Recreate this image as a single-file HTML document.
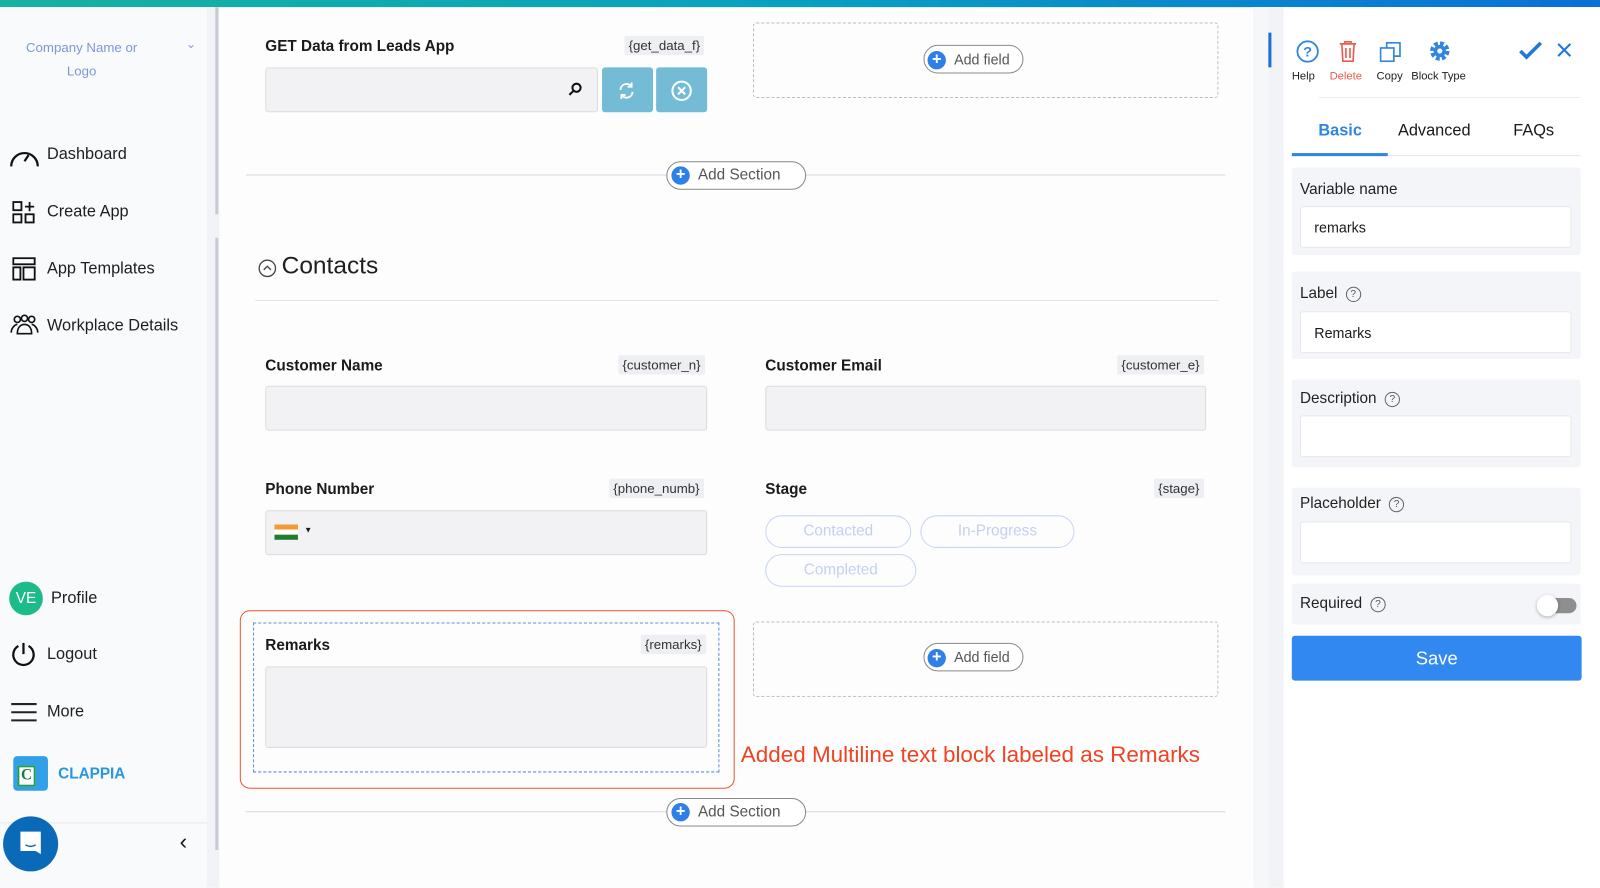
<!DOCTYPE html>
<html><head><meta charset="utf-8"><style>
*{box-sizing:border-box;margin:0;padding:0}
html,body{width:1600px;height:870px;overflow:hidden;background:#fdfdfe}
#w{position:absolute;left:0;top:0;width:1568px;height:853px;transform:scale(1.0204);transform-origin:0 0;font-family:"Liberation Sans",sans-serif;color:#1a1a1a}
.a{position:absolute}
.topbar{left:0;top:0;width:1568px;height:7px;background:linear-gradient(90deg,#17b2a0,#0aa0c0 50%,#0b6fd6)}
.nav{font-size:16px;color:#1f1f1f}
.lbl{font-size:15px;font-weight:bold;color:#1a1a1a}
.tag{font-size:13px;background:#eeeff2;color:#333;padding:2px 4px;border-radius:2px}
.inp{background:#f2f2f4;border:1px solid #dcdcdf;border-radius:3px}
.hr{height:1px;background:#d8d8dc}
.pill{border:1px solid #c7d4f3;border-radius:16px;color:#c3d0ef;font-size:15px;text-align:center;line-height:30px;height:32px}
.addbtn{border:1px solid #888;border-radius:14px;background:#fff;font-size:14px;color:#555;height:28px;line-height:26px}
.plus{display:inline-block;width:18px;height:18px;border-radius:50%;background:#2f7fe8;color:#fff;text-align:center;line-height:18px;font-weight:bold;font-size:16px;vertical-align:middle;margin-right:8px}
.dash{border:1px dashed #bbb;border-radius:3px}
.pcard{background:#f4f5f8;border-radius:3px}
.pin{background:#fff;border:1px solid #e8e8ec;border-radius:3px;font-size:14px;padding-left:13px;line-height:40px;height:41px}
.pl{font-size:15px;color:#222}
.q{display:inline-block;width:15px;height:15px;border:1px solid #666;border-radius:50%;font-size:10px;text-align:center;line-height:13px;color:#555;margin-left:8px;vertical-align:middle}
</style></head><body><div id="w">
<div class="a topbar"></div>
<div class="a" style="left:0;top:7px;width:203px;height:863px;background:#f9fafc"></div>
<div class="a" style="left:203px;top:7px;width:12px;height:863px;background:#f2f3f6"></div>
<div class="a" style="left:211px;top:7px;width:3px;height:203px;background:#c8cbd1"></div>
<div class="a" style="left:211px;top:233px;width:3px;height:600px;background:#c8cbd1"></div>
<div class="a" style="left:20px;top:35px;width:120px;text-align:center;font-size:13px;color:#7d98d6;line-height:23px">Company Name or<br>Logo</div>
<div class="a" style="left:182px;top:36px;font-size:12px;color:#8aa0d8">&#8964;</div>
<svg class="a" style="left:8px;top:140px" width="32" height="26" viewBox="0 0 32 26"><path d="M3 23 A13 13 0 1 1 29 23" fill="none" stroke="#111" stroke-width="2.2"/><path d="M16 18 L20 12" stroke="#111" stroke-width="2.2"/></svg>
<div class="a nav" style="left:46px;top:143px">Dashboard</div>
<svg class="a" style="left:12px;top:197px" width="24" height="24" viewBox="0 0 24 24" fill="none" stroke="#111" stroke-width="1.8"><rect x="1" y="1" width="8" height="8"/><rect x="1" y="13" width="8" height="8"/><rect x="13" y="13" width="8" height="8"/><path d="M17 1v9M12.5 5.5h9"/></svg>
<div class="a nav" style="left:46px;top:199px">Create App</div>
<svg class="a" style="left:12px;top:252px" width="24" height="24" viewBox="0 0 24 24" fill="none" stroke="#111" stroke-width="1.8"><rect x="1" y="1" width="21" height="6"/><rect x="1" y="10" width="7" height="12"/><rect x="11" y="10" width="11" height="12"/></svg>
<div class="a nav" style="left:46px;top:255px">App Templates</div>
<svg class="a" style="left:9px;top:308px" width="30" height="20" viewBox="0 0 30 20" fill="none" stroke="#111" stroke-width="1.6"><circle cx="8" cy="5" r="3"/><circle cx="15" cy="4" r="3"/><circle cx="22" cy="5" r="3"/><path d="M2 18c0-5 4-8 6-8M28 18c0-5-4-8-6-8M8 19c0-6 3-9 7-9s7 3 7 9z"/></svg>
<div class="a nav" style="left:46px;top:311px">Workplace Details</div>
<div class="a" style="left:9px;top:570px;width:33px;height:33px;border-radius:50%;background:#1dbb8a;color:#fff;font-size:15px;text-align:center;line-height:33px">VE</div>
<div class="a nav" style="left:50px;top:578px">Profile</div>
<svg class="a" style="left:10px;top:628px" width="26" height="26" viewBox="0 0 26 26" fill="none" stroke="#111" stroke-width="2.2"><path d="M8 5a10 10 0 1 0 10 0"/><path d="M13 2v11"/></svg>
<div class="a nav" style="left:46px;top:633px">Logout</div>
<svg class="a" style="left:10px;top:688px" width="26" height="20" viewBox="0 0 26 20" stroke="#222" stroke-width="2"><path d="M1 2h25M1 10h25M1 18h25"/></svg>
<div class="a nav" style="left:46px;top:689px">More</div>
<div class="a" style="left:13px;top:741px;width:34px;height:34px;border-radius:4px;background:#32a0e8"></div>
<div class="a" style="left:17px;top:750px;width:18px;height:21px;background:#fff;border:2px solid #1f9d55;color:#1f7a3a;font-size:15px;font-weight:bold;text-align:center;line-height:17px;font-family:'Liberation Serif',serif">C</div>
<div class="a" style="left:57px;top:750px;font-size:15px;font-weight:bold;color:#2a96e0">CLAPPIA</div>
<div class="a hr" style="left:0;top:806px;width:203px;background:#e8e9ec"></div>
<div class="a" style="left:3px;top:800px;width:54px;height:54px;border-radius:50%;background:#0b6ab8"></div>
<svg class="a" style="left:17px;top:813px" width="26" height="28" viewBox="0 0 26 28"><path d="M3 2h20v22l-5-3H3z" fill="#fff"/><path d="M8 15q5 3 10 0" stroke="#0b6ab8" stroke-width="1.5" fill="none"/></svg>
<div class="a" style="left:176px;top:812px;font-size:22px;color:#111">&#8249;</div>
<div class="a lbl" style="left:260px;top:37px">GET Data from Leads App</div>
<div class="a tag" style="left:612px;top:35px">{get_data_f}</div>
<div class="a inp" style="left:260px;top:66px;width:326px;height:44px"></div>
<svg class="a" style="left:557px;top:80px" width="14" height="14" viewBox="0 0 14 14" fill="none" stroke="#111" stroke-width="2"><circle cx="8" cy="6" r="4"/><path d="M5 9l-4 4"/></svg>
<div class="a" style="left:590px;top:66px;width:50px;height:44px;background:#74bcd6;border-radius:3px"></div>
<svg class="a" style="left:604px;top:79px" width="20" height="20" viewBox="0 0 20 20" fill="none" stroke="#fff" stroke-width="1.8"><path d="M4 9a6 6 0 0 1 11-3M16 11a6 6 0 0 1-11 3"/><path d="M15 2v4h-4M5 18v-4h4"/></svg>
<div class="a" style="left:643px;top:66px;width:50px;height:44px;background:#74bcd6;border-radius:3px"></div>
<svg class="a" style="left:657px;top:78px" width="22" height="22" viewBox="0 0 22 22" fill="none" stroke="#fff" stroke-width="2"><circle cx="11" cy="11" r="9"/><path d="M7.5 7.5l7 7M14.5 7.5l-7 7"/></svg>
<div class="a dash" style="left:738px;top:22px;width:456px;height:74px"></div>
<div class="a addbtn" style="left:905px;top:44px;width:98px;padding-left:3px"><span class="plus">+</span>Add field</div>
<div class="a hr" style="left:241px;top:171px;width:960px"></div>
<div class="a addbtn" style="left:653px;top:158px;width:137px;padding-left:4px;font-size:15px"><span class="plus">+</span>Add Section</div>
<svg class="a" style="left:253px;top:254px" width="18" height="18" viewBox="0 0 18 18" fill="none" stroke="#444" stroke-width="1.3"><circle cx="9" cy="9" r="8"/><path d="M5.5 10.5L9 7l3.5 3.5"/></svg>
<div class="a" style="left:276px;top:247px;font-size:24px;color:#1f1f1f">Contacts</div>
<div class="a hr" style="left:250px;top:294px;width:944px;background:#e2e3e6"></div>
<div class="a lbl" style="left:260px;top:350px">Customer Name</div>
<div class="a tag" style="left:606px;top:348px">{customer_n}</div>
<div class="a inp" style="left:260px;top:378px;width:433px;height:44px"></div>
<div class="a lbl" style="left:750px;top:350px">Customer Email</div>
<div class="a tag" style="left:1095px;top:348px">{customer_e}</div>
<div class="a inp" style="left:750px;top:378px;width:432px;height:44px"></div>
<div class="a lbl" style="left:260px;top:471px">Phone Number</div>
<div class="a tag" style="left:597px;top:469px">{phone_numb}</div>
<div class="a inp" style="left:260px;top:500px;width:433px;height:44px"></div>
<div class="a" style="left:269px;top:514px;width:23px;height:5px;background:#f49a3a"></div>
<div class="a" style="left:269px;top:519px;width:23px;height:5px;background:#fff"></div>
<div class="a" style="left:269px;top:524px;width:23px;height:5px;background:#1f7d2c"></div>
<div class="a" style="left:298px;top:515px;font-size:8px">&#9660;</div>
<div class="a lbl" style="left:750px;top:471px">Stage</div>
<div class="a tag" style="left:1131px;top:469px">{stage}</div>
<div class="a pill" style="left:750px;top:505px;width:143px">Contacted</div>
<div class="a pill" style="left:902px;top:505px;width:151px">In-Progress</div>
<div class="a pill" style="left:750px;top:543px;width:148px">Completed</div>
<div class="a" style="left:235px;top:598px;width:485px;height:175px;border:1.5px solid #f0532e;border-radius:10px"></div>
<div class="a" style="left:248px;top:610px;width:457px;height:147px;border:1px dashed #5a8fd8"></div>
<div class="a lbl" style="left:260px;top:624px">Remarks</div>
<div class="a tag" style="left:628px;top:622px">{remarks}</div>
<div class="a inp" style="left:260px;top:653px;width:433px;height:80px"></div>
<div class="a dash" style="left:738px;top:609px;width:456px;height:74px"></div>
<div class="a addbtn" style="left:905px;top:630px;width:98px;padding-left:3px"><span class="plus">+</span>Add field</div>
<div class="a" style="left:726px;top:727px;font-size:22px;color:#ef4323">Added Multiline text block labeled as Remarks</div>
<div class="a hr" style="left:241px;top:795px;width:960px"></div>
<div class="a addbtn" style="left:653px;top:782px;width:137px;padding-left:4px;font-size:15px"><span class="plus">+</span>Add Section</div>
<div class="a" style="left:1228px;top:7px;width:15px;height:863px;background:#f6f7f9"></div>
<div class="a" style="left:1243px;top:7px;width:357px;height:863px;background:#fff"></div>
<div class="a" style="left:1243px;top:7px;width:15px;height:863px;background:#f2f3f6"></div>
<div class="a" style="left:1243px;top:32px;width:3px;height:34px;background:#1d6fd6"></div>
<svg class="a" style="left:1270px;top:39px" width="23" height="23" viewBox="0 0 23 23"><circle cx="11.5" cy="11.5" r="10" fill="none" stroke="#2f86e0" stroke-width="1.8"/><text x="11.5" y="16.5" text-anchor="middle" font-size="14" font-weight="bold" fill="#2f86e0" font-family="Liberation Sans">?</text></svg>
<svg class="a" style="left:1311px;top:39px" width="20" height="22" viewBox="0 0 20 22" fill="none" stroke="#ec5b4d" stroke-width="1.6"><path d="M2 4h16M7 4V2h6v2M4 4l1 17h10l1-17M8 8v10M12 8v10"/></svg>
<svg class="a" style="left:1352px;top:40px" width="22" height="22" viewBox="0 0 22 22" fill="none" stroke="#2f86e0" stroke-width="1.6"><rect x="1" y="7" width="13" height="13"/><path d="M7 7V2h13v13h-6"/></svg>
<svg class="a" style="left:1400px;top:39px" width="22" height="22" viewBox="0 0 22 22"><circle cx="11" cy="11" r="7" fill="none" stroke="#2f86e0" stroke-width="5" stroke-dasharray="3.5 2"/><circle cx="11" cy="11" r="6" fill="#2f86e0"/><circle cx="11" cy="11" r="2.5" fill="#fff"/></svg>
<div class="a" style="left:1266px;top:69px;font-size:11px;color:#222">Help</div>
<div class="a" style="left:1303px;top:69px;font-size:11px;color:#ec5b4d">Delete</div>
<div class="a" style="left:1349px;top:69px;font-size:11px;color:#222">Copy</div>
<div class="a" style="left:1383px;top:69px;font-size:11px;color:#222">Block Type</div>
<svg class="a" style="left:1488px;top:40px" width="24" height="20" viewBox="0 0 24 20" fill="none" stroke="#1f78d8" stroke-width="3.5"><path d="M2 10l6 6L22 2"/></svg>
<svg class="a" style="left:1526px;top:42px" width="14" height="14" viewBox="0 0 14 14" stroke="#1f78d8" stroke-width="2"><path d="M1 1l12 12M13 1L1 13"/></svg>
<div class="a hr" style="left:1292px;top:95px;width:257px;background:#eceef1"></div>
<div class="a" style="left:1292px;top:120px;font-size:16px;font-weight:bold;color:#2f86e0">Basic</div>
<div class="a" style="left:1370px;top:120px;font-size:16px;color:#1a1a1a">Advanced</div>
<div class="a" style="left:1483px;top:120px;font-size:16px;color:#1a1a1a">FAQs</div>
<div class="a hr" style="left:1266px;top:152px;width:283px;background:#e6e8ec"></div>
<div class="a" style="left:1266px;top:150px;width:94px;height:3px;background:#2f86e0"></div>
<div class="a pcard" style="left:1266px;top:164px;width:283px;height:86px"></div>
<div class="a pl" style="left:1274px;top:177px">Variable name</div>
<div class="a pin" style="left:1274px;top:202px;width:266px">remarks</div>
<div class="a pcard" style="left:1266px;top:266px;width:283px;height:86px"></div>
<div class="a pl" style="left:1274px;top:279px">Label<span class="q">?</span></div>
<div class="a pin" style="left:1274px;top:305px;width:266px">Remarks</div>
<div class="a pcard" style="left:1266px;top:372px;width:283px;height:86px"></div>
<div class="a pl" style="left:1274px;top:382px">Description<span class="q">?</span></div>
<div class="a pin" style="left:1274px;top:407px;width:266px"></div>
<div class="a pcard" style="left:1266px;top:478px;width:283px;height:86px"></div>
<div class="a pl" style="left:1274px;top:485px">Placeholder<span class="q">?</span></div>
<div class="a pin" style="left:1274px;top:511px;width:266px"></div>
<div class="a pcard" style="left:1266px;top:572px;width:283px;height:40px"></div>
<div class="a pl" style="left:1274px;top:583px">Required<span class="q">?</span></div>
<div class="a" style="left:1513px;top:586px;width:32px;height:15px;border-radius:8px;background:#8e8e8e"></div>
<div class="a" style="left:1506px;top:583px;width:21px;height:21px;border-radius:50%;background:#fff;box-shadow:0 1px 3px rgba(0,0,0,.3)"></div>
<div class="a" style="left:1266px;top:623px;width:284px;height:44px;background:#3088f0;border-radius:3px;color:#fff;font-size:18px;text-align:center;line-height:44px">Save</div>
</div></body></html>
